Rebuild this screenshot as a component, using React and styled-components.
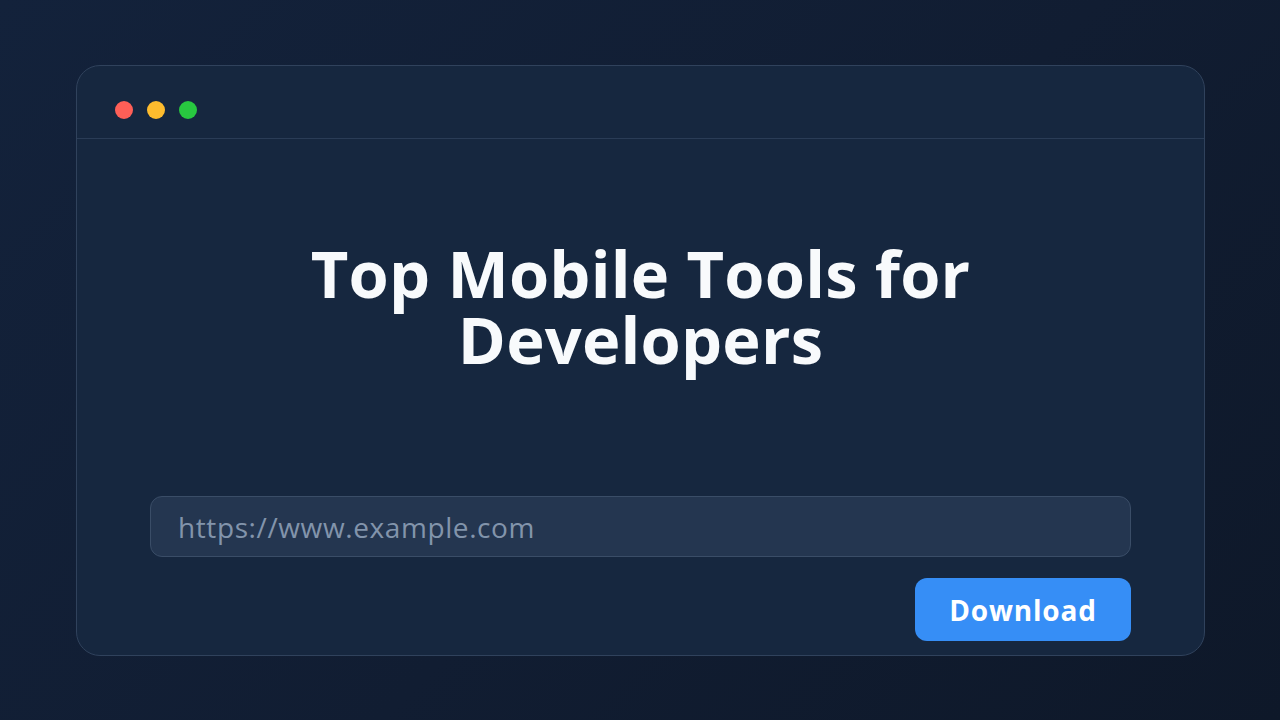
import styled, { createGlobalStyle } from "styled-components";

const GlobalStyle = createGlobalStyle`
	html, body {
		margin: 0;
		padding: 0;
		height: 100%;
	}
	body {
		font-family: "Open Sans", "Noto Sans", sans-serif;
		background: linear-gradient(135deg, #13223b 0%, #111d32 55%, #0e1829 100%);
	}
	#root {
		height: 100%;
	}
`;

const Page = styled.main`
	height: 720px;
	box-sizing: border-box;
	padding: 65px 75px 64px 76px;
	display: flex;
`;

const Window = styled.section`
	flex: 1;
	display: flex;
	flex-direction: column;
	background: #16273f;
	border: 1px solid #30425c;
	border-radius: 24px;
	overflow: hidden;
`;

// dots sit a bit below the middle of the bar
const TitleBar = styled.div`
	height: 74px;
	box-sizing: border-box;
	padding: 35px 0 0 38px;
	display: flex;
	align-items: flex-start;
	gap: 14px;
	border-bottom: 1px solid #2a3c56;
`;

const Dot = styled.span`
	width: 18px;
	height: 18px;
	border-radius: 50%;
	background: ${(p) => p.$color};
`;

const Body = styled.div`
	flex: 1;
	display: flex;
	flex-direction: column;
	padding: 0 73px 14px 73px;
`;

const Title = styled.h1`
	margin: 101px 0 0;
	text-align: center;
	color: #f8fafc;
	font-size: 65px;
	font-weight: 700;
	line-height: 66px;
	letter-spacing: 0.2px;
`;

const UrlInput = styled.input`
	margin-top: 124px;
	height: 61px;
	box-sizing: border-box;
	padding: 0 27px;
	background: #243650;
	border: 1.5px solid #3a4d67;
	border-radius: 12px;
	color: #cbd5e1;
	font-family: "Open Sans", "Noto Sans", sans-serif;
	font-size: 28px;
	letter-spacing: 0.6px;
	outline: none;
	&::placeholder {
		color: #8294ab;
	}
`;

const Actions = styled.div`
	display: flex;
	justify-content: flex-end;
	margin-top: 21px;
`;

const Button = styled.button`
	width: 216px;
	height: 63px;
	border: none;
	border-radius: 12px;
	background: #368ef6;
	color: #ffffff;
	font-family: "Open Sans", "Noto Sans", sans-serif;
	font-size: 28px;
	font-weight: 700;
	letter-spacing: 0.8px;
	cursor: pointer;
`;

const App = () => {
	return (
		<>
			<GlobalStyle />
			<Page>
				<Window>
					<TitleBar>
						<Dot $color="#fe5f57" />
						<Dot $color="#febc2e" />
						<Dot $color="#28c840" />
					</TitleBar>
					<Body>
						<Title>
							Top Mobile Tools for
							<br />
							Developers
						</Title>
						<UrlInput placeholder="https://www.example.com" />
						<Actions>
							<Button>Download</Button>
						</Actions>
					</Body>
				</Window>
			</Page>
		</>
	);
};

export default App;
